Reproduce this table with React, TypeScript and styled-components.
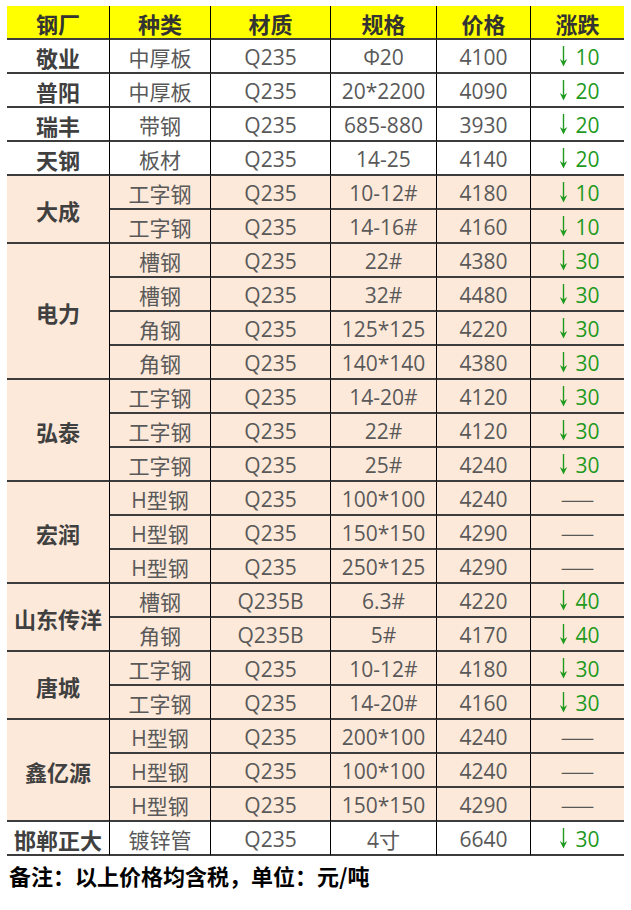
import React from "react";
import styled, { createGlobalStyle } from "styled-components";

const GlobalStyle = createGlobalStyle`
  html, body { margin: 0; padding: 0; background: #ffffff; }
  body { font-family: "Open Sans", "Noto Sans CJK SC", sans-serif; }
`;

const Page = styled.div`
  padding: 6px 0 0 7px;
  width: 617px;
`;

const Grid = styled.div`
  display: grid;
  grid-template-columns: 103px 101px 120px 106px 94px 93px;
  grid-auto-rows: 34px;
`;

const Cell = styled.div<{ $bg: string; $last?: boolean; $span?: number }>`
  box-sizing: border-box;
  display: flex;
  align-items: center;
  justify-content: center;
  background: ${(p) => p.$bg};
  border-bottom: 2px solid #3c3c3c;
  border-right: ${(p) => (p.$last ? "none" : "1px solid #000")};
  grid-row: ${(p) => (p.$span ? `span ${p.$span}` : "auto")};
  font-family: "Open Sans", "Noto Sans CJK SC", sans-serif;
  font-size: 21px;
  color: #595959;
  white-space: nowrap;
  padding-top: 1px;
`;

const HeadCell = styled(Cell)`
  font-family: "Noto Sans CJK SC", sans-serif;
  font-weight: 700;
  font-size: 22px;
  color: #333333;
`;

const NameCell = styled(Cell)`
  font-family: "Noto Sans CJK SC", sans-serif;
  font-weight: 700;
  font-size: 22px;
  color: #404040;
`;

const Down = styled.span`
  display: inline-flex;
  align-items: center;
  color: #1f9a1f;
  font-size: 21px;
  margin-left: 4px;
`;

const Arrow = styled.svg`
  width: 9px;
  height: 22px;
  margin-right: 7px;
  margin-top: -1px;
`;

const Flat = styled.span`
  font-family: "Noto Sans CJK SC", sans-serif;
  font-size: 20px;
  color: #595959;
`;

const Note = styled.div`
  font-family: "Noto Sans CJK SC", sans-serif;
  font-weight: 700;
  font-size: 22px;
  line-height: 38px;
  color: #000;
  padding-left: 2px;
`;

type Item = [string, string, string, string, number | null];
type Group = { name: string; bg: string; items: Item[] };

const W = "#ffffff";
const P = "#fde9d9";

const groups: Group[] = [
  { name: "敬业", bg: W, items: [["中厚板", "Q235", "Φ20", "4100", 10]] },
  { name: "普阳", bg: W, items: [["中厚板", "Q235", "20*2200", "4090", 20]] },
  { name: "瑞丰", bg: W, items: [["带钢", "Q235", "685-880", "3930", 20]] },
  { name: "天钢", bg: W, items: [["板材", "Q235", "14-25", "4140", 20]] },
  {
    name: "大成",
    bg: P,
    items: [
      ["工字钢", "Q235", "10-12#", "4180", 10],
      ["工字钢", "Q235", "14-16#", "4160", 10],
    ],
  },
  {
    name: "电力",
    bg: P,
    items: [
      ["槽钢", "Q235", "22#", "4380", 30],
      ["槽钢", "Q235", "32#", "4480", 30],
      ["角钢", "Q235", "125*125", "4220", 30],
      ["角钢", "Q235", "140*140", "4380", 30],
    ],
  },
  {
    name: "弘泰",
    bg: P,
    items: [
      ["工字钢", "Q235", "14-20#", "4120", 30],
      ["工字钢", "Q235", "22#", "4120", 30],
      ["工字钢", "Q235", "25#", "4240", 30],
    ],
  },
  {
    name: "宏润",
    bg: P,
    items: [
      ["H型钢", "Q235", "100*100", "4240", null],
      ["H型钢", "Q235", "150*150", "4290", null],
      ["H型钢", "Q235", "250*125", "4290", null],
    ],
  },
  {
    name: "山东传洋",
    bg: P,
    items: [
      ["槽钢", "Q235B", "6.3#", "4220", 40],
      ["角钢", "Q235B", "5#", "4170", 40],
    ],
  },
  {
    name: "唐城",
    bg: P,
    items: [
      ["工字钢", "Q235", "10-12#", "4180", 30],
      ["工字钢", "Q235", "14-20#", "4160", 30],
    ],
  },
  {
    name: "鑫亿源",
    bg: P,
    items: [
      ["H型钢", "Q235", "200*100", "4240", null],
      ["H型钢", "Q235", "100*100", "4240", null],
      ["H型钢", "Q235", "150*150", "4290", null],
    ],
  },
  { name: "邯郸正大", bg: W, items: [["镀锌管", "Q235", "4寸", "6640", 30]] },
];

const headers = ["钢厂", "种类", "材质", "规格", "价格", "涨跌"];

function Change({ v }: { v: number | null }) {
  if (v === null) return <Flat>——</Flat>;
  return (
    <Down>
      <Arrow viewBox="0 0 9 22">
        <line x1="4.5" y1="1" x2="4.5" y2="17" stroke="#1f9a1f" strokeWidth="1.4" />
        <path d="M0.8 14 L4.5 21.5 L8.2 14 L4.5 16.5 Z" fill="#1f9a1f" />
      </Arrow>
      {v}
    </Down>
  );
}

export default function App() {
  return (
    <Page>
      <GlobalStyle />
      <Grid>
        {headers.map((h, i) => (
          <HeadCell key={h} $bg="#ffff00" $last={i === 5}>
            {h}
          </HeadCell>
        ))}
        {groups.map((g) => (
          <React.Fragment key={g.name}>
            <NameCell $bg={g.bg} $span={g.items.length}>
              {g.name}
            </NameCell>
            {g.items.map((it, j) => (
              <React.Fragment key={j}>
                <Cell $bg={g.bg}>{it[0]}</Cell>
                <Cell $bg={g.bg}>{it[1]}</Cell>
                <Cell $bg={g.bg}>{it[2]}</Cell>
                <Cell $bg={g.bg}>{it[3]}</Cell>
                <Cell $bg={g.bg} $last>
                  <Change v={it[4]} />
                </Cell>
              </React.Fragment>
            ))}
          </React.Fragment>
        ))}
      </Grid>
      <Note>备注：以上价格均含税，单位：元/吨</Note>
    </Page>
  );
}
